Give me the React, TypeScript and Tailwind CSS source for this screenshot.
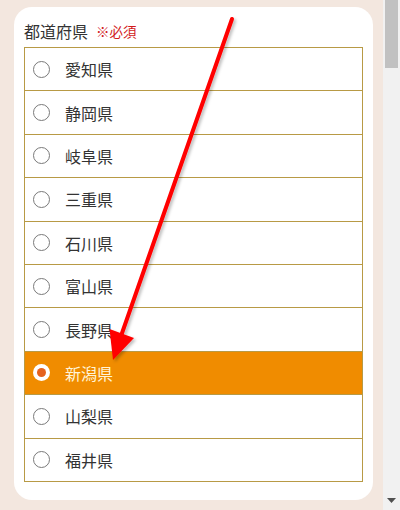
import React from "react";

const prefs = ["愛知県", "静岡県", "岐阜県", "三重県", "石川県", "富山県", "長野県", "新潟県", "山梨県", "福井県"];

export default function App() {
  return (
    <div
      className="relative flex h-[510px] w-[400px] overflow-hidden bg-[#f3e7df]"
      style={{ fontFamily: '"Noto Sans CJK JP", "Noto Sans", sans-serif' }}
    >
      <div className="w-[383px] pl-[14px] pr-[10px] pt-[7px]">
        <div className="h-[493px] rounded-[18px] bg-white px-[10px] pt-[8px]">
          <div className="flex h-[32px] items-center gap-[8px]">
            <span className="text-[16px] text-[#333]">都道府県</span>
            <span className="text-[13.5px] text-[#d21a1a]">※必須</span>
          </div>
          <div className="border-x border-t border-[#b89a45]">
            {prefs.map((p, i) => {
              const sel = p === "新潟県";
              return (
                <div
                  key={p}
                  className={
                    sel
                      ? "flex h-[43.4px] items-center border-b border-[#b89a45] bg-[#f08c00] pl-[8px]"
                      : "flex h-[43.4px] items-center border-b border-[#b89a45] bg-white pl-[8px]"
                  }
                >
                  {sel ? (
                    <span className="flex h-[17px] w-[17px] items-center justify-center rounded-full bg-white">
                      <span className="h-[9px] w-[9px] rounded-full bg-[#e5621e]" />
                    </span>
                  ) : (
                    <span className="h-[17px] w-[17px] rounded-full border border-[#7a7a7a] bg-white" />
                  )}
                  <span
                    className={
                      sel
                        ? "ml-[15px] text-[16px] text-[#fff4d8]"
                        : "ml-[15px] text-[16px] text-[#333]"
                    }
                  >
                    {p}
                  </span>
                </div>
              );
            })}
          </div>
        </div>
      </div>
      <div className="relative w-[17px] bg-[#f1f1f1]">
        <div className="ml-[2px] h-[68px] w-[13px] bg-[#c1c1c1]" />
        <svg className="absolute bottom-[6px] left-[4px]" width="9" height="6" viewBox="0 0 9 6">
          <polygon points="0,0 9,0 4.5,5" fill="#505050" />
        </svg>
      </div>
      <svg
        className="pointer-events-none absolute left-0 top-0"
        width="400"
        height="510"
        viewBox="0 0 400 510"
      >
        <defs>
          <filter id="sh" x="-20%" y="-20%" width="140%" height="140%">
            <feDropShadow dx="2" dy="2" stdDeviation="1.5" floodColor="#000" floodOpacity="0.25" />
          </filter>
        </defs>
        <g filter="url(#sh)">
          <line x1="232" y1="19" x2="121" y2="336" stroke="#ff0000" strokeWidth="4" strokeLinecap="round" />
          <polygon points="109.5,329 134,338 113,360" fill="#ff0000" />
        </g>
      </svg>
    </div>
  );
}
